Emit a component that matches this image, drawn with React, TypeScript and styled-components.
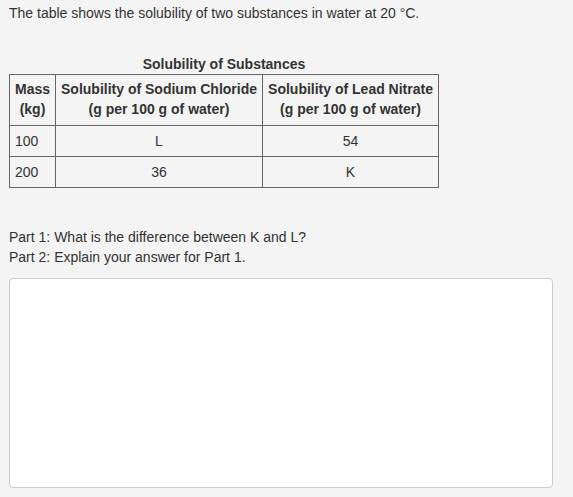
import React from "react";
import styled, { createGlobalStyle } from "styled-components";

const Global = createGlobalStyle`
  html, body { margin: 0; padding: 0; background: #f4f4f4; }
  body { font-family: "Liberation Sans", Arial, sans-serif; color: #333; }
`;

const Page = styled.div`
  padding: 3px 21px 10px 9px;
  font-size: 14px;
  line-height: 20px;
`;

const Intro = styled.p`
  margin: 0 0 31px;
`;

const Table = styled.table`
  border-collapse: collapse;
  table-layout: fixed;
  width: 429px;
`;

const Caption = styled.caption`
  font-weight: bold;
  line-height: 20px;
`;

const Col = styled.col<{ $w: number }>`
  width: ${(p) => p.$w}px;
`;

const Th = styled.th`
  border: 1px solid #666;
  font-weight: bold;
  line-height: 20px;
  padding: 4px 0 6px;
  text-align: center;
  white-space: nowrap;
`;

const Td = styled.td<{ $align?: "left" | "center" }>`
  border: 1px solid #666;
  padding: 5px 5px 5px;
  height: 20px;
  text-align: ${(p) => p.$align ?? "center"};
`;

const Questions = styled.div`
  margin-top: 39px;
`;

const Line = styled.p`
  margin: 0;
`;

const Answer = styled.textarea`
  display: block;
  box-sizing: border-box;
  width: 544px;
  height: 210px;
  margin-top: 11px;
  background: #fff;
  border: 1px solid #ccc;
  border-radius: 4px;
  resize: none;
  font-family: inherit;
`;

export default function App() {
  return (
    <>
      <Global />
      <Page>
        <Intro>The table shows the solubility of two substances in water at 20 °C.</Intro>
        <Table>
          <Caption>Solubility of Substances</Caption>
          <colgroup>
            <Col $w={46} />
            <Col $w={207} />
            <Col $w={176} />
          </colgroup>
          <thead>
            <tr>
              <Th>Mass<br />(kg)</Th>
              <Th>Solubility of Sodium Chloride<br />(g per 100 g of water)</Th>
              <Th>Solubility of Lead Nitrate<br />(g per 100 g of water)</Th>
            </tr>
          </thead>
          <tbody>
            <tr>
              <Td $align="left">100</Td>
              <Td>L</Td>
              <Td>54</Td>
            </tr>
            <tr>
              <Td $align="left">200</Td>
              <Td>36</Td>
              <Td>K</Td>
            </tr>
          </tbody>
        </Table>
        <Questions>
          <Line>Part 1: What is the difference between K and L?</Line>
          <Line>Part 2: Explain your answer for Part 1.</Line>
        </Questions>
        <Answer />
      </Page>
    </>
  );
}
